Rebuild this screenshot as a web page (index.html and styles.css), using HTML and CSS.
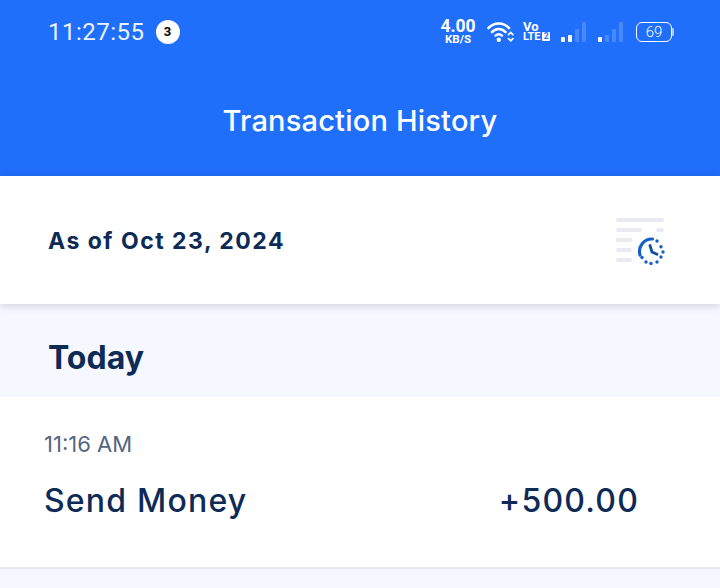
FILE: index.html
```html
<!DOCTYPE html>
<html lang="en">
<head>
<meta charset="utf-8">
<title>Transaction History</title>
<link rel="stylesheet" href="styles.css">
</head>
<body>
<header class="header">
  <div class="status">
    <div class="status-left">
      <span class="clock">11:27:55</span>
      <span class="badge">3</span>
    </div>
    <div class="status-right">
      <div class="speed"><span class="speed-num">4.00</span><span class="speed-unit">KB/S</span></div>
      <svg class="wifi" width="28" height="22" viewBox="0 0 28 22" fill="none" stroke="#fff" stroke-linecap="round">
        <path d="M1.5 7C7.5 1 16 1 22 7" stroke-width="2.6"/>
        <path d="M5 11C9 7 14.5 7 18.5 11" stroke-width="2.6"/>
        <path d="M8.5 14.6C10.5 12.8 13 12.8 15 14.6" stroke-width="2.4"/>
        <circle cx="11.8" cy="18.8" r="2.2" fill="#fff" stroke="none"/>
        <path d="M21.5 13.6l2.2-2.2 2.2 2.2M21.5 17.6l2.2 2.2 2.2-2.2" stroke-width="1.7"/>
      </svg>
      <div class="volte">
        <span class="vo">Vo</span>
        <span class="lte">LTE<span class="sim">2</span></span>
      </div>
      <div class="signal signal-a">
        <i class="bar b1 on"></i><i class="bar b2 on"></i><i class="bar b3"></i><i class="bar b4"></i>
      </div>
      <div class="signal signal-b">
        <i class="bar b1 on"></i><i class="bar b2"></i><i class="bar b3"></i><i class="bar b4"></i>
      </div>
      <div class="battery"><span class="battery-body">69</span><i class="battery-cap"></i></div>
    </div>
  </div>
  <h1 class="title">Transaction History</h1>
</header>
<section class="asof">
  <span class="asof-text">As of Oct 23, 2024</span>
  <svg class="history-icon" width="50" height="50" viewBox="0 0 50 50" fill="none">
    <g fill="#e9ebf1">
      <rect x="0" y="0" width="48" height="4" rx="2"/>
      <rect x="0" y="10" width="26" height="4" rx="2"/>
      <rect x="40" y="10" width="8" height="4" rx="2"/>
      <rect x="0" y="20" width="16" height="4" rx="2"/>
      <rect x="0" y="30" width="16" height="4" rx="2"/>
      <rect x="0" y="40" width="16" height="4" rx="2"/>
    </g>
    <path d="M24 37A12.5 12.5 0 0 1 36.5 21" stroke="#1560c8" stroke-width="3.2" stroke-linecap="round"/>
    <path d="M34 27.5l2 6.5 5 2.2" stroke="#0d4fa8" stroke-width="2.8" stroke-linecap="round" stroke-linejoin="round"/>
    <g fill="#1560c8">
      <circle cx="41" cy="23" r="1.7"/><circle cx="45" cy="28.7" r="1.7"/><circle cx="47" cy="34" r="1.7"/><circle cx="45" cy="39" r="1.7"/><circle cx="41" cy="44" r="1.7"/><circle cx="35" cy="45.5" r="1.7"/><circle cx="30" cy="44" r="1.7"/><circle cx="26" cy="39.5" r="1.7"/>
    </g>
  </svg>
</section>
<section class="group"><h2 class="group-title">Today</h2></section>
<section class="txn">
  <div class="txn-time">11:16 AM</div>
  <div class="txn-row">
    <span class="txn-name">Send Money</span>
    <span class="txn-amount">+500.00</span>
  </div>
</section>
</body>
</html>
```
FILE: styles.css
```css
* { box-sizing: border-box; }
html, body { margin: 0; height: 100%; }
body {
  width: 720px;
  height: 588px;
  overflow: hidden;
  background: #f5f8fe;
  font-family: Inter, Lato, sans-serif;
  color: #0e2a56;
}
.header {
  height: 176px;
  background: #1f6ffb;
  color: #fff;
  display: flex;
  flex-direction: column;
}
.status {
  height: 63px;
  padding: 0 46px 0 48px;
  display: flex;
  justify-content: space-between;
  align-items: center;
}
.status-left { display: flex; align-items: center; gap: 11px; }
.clock { font-family: Roboto, sans-serif; font-size: 24px; letter-spacing: 0.5px; color: #eaf2ff; }
.badge {
  width: 24px; height: 24px; border-radius: 50%;
  background: #fff; color: #000;
  font: 700 13px Roboto, sans-serif;
  display: flex; align-items: center; justify-content: center;
}
.status-right { display: flex; align-items: center; }
.speed { display: flex; flex-direction: column; align-items: center; width: 34px; margin-right: 12px; font-family: Roboto, sans-serif; font-weight: 700; }
.speed-num { font-size: 17.5px; line-height: 15px; }
.speed-unit { font-size: 11.5px; line-height: 11px; }
.wifi { margin-right: 8px; }
.volte { display: flex; flex-direction: column; width: 27px; font-family: Roboto, sans-serif; font-weight: 700; margin-right: 11px; }
.vo { font-size: 13px; line-height: 10px; }
.lte { font-size: 11px; line-height: 10px; letter-spacing: -0.2px; display: flex; align-items: center; gap: 2px; white-space: nowrap; }
.sim { background: #fff; color: #1f6ffb; font-size: 8.5px; padding: 0 1.5px; border-radius: 1px; line-height: 9px; }
.signal { display: flex; align-items: flex-end; gap: 3px; height: 20px; }
.signal-a { margin-right: 12px; }
.signal-b { margin-right: 13px; }
.bar { display: block; width: 4px; background: #4589fc; border-radius: 1px; }
.bar.on { background: #fff; }
.b1 { height: 5px; }
.b2 { height: 7px; }
.b3 { height: 13px; }
.b4 { height: 20px; }
.battery { display: flex; align-items: center; }
.battery-body {
  width: 36px; height: 20px;
  border: 1.5px solid #fff; border-radius: 6px;
  font: 300 15px Roboto, sans-serif;
  display: flex; align-items: center; justify-content: center;
}
.battery-cap { display: block; width: 2px; height: 8px; background: #a9c8fd; border-radius: 0 1px 1px 0; }
.title {
  margin: 0;
  flex: 1;
  padding-top: 1px;
  display: flex; align-items: center; justify-content: center;
  font-size: 29px;
  font-weight: 500;
  letter-spacing: 0.2px;
}
.asof {
  position: relative;
  height: 128px;
  background: #fff;
  padding: 2px 54px 0 48px;
  display: flex;
  align-items: center;
  justify-content: space-between;
  box-shadow: 0 2px 8px rgba(20, 20, 20, 0.16);
}
.asof-text { font-size: 23px; font-weight: 700; letter-spacing: 1.5px; }
.history-icon { margin-top: 3px; }
.group {
  height: 93px;
  padding: 13px 0 0 48px;
  display: flex;
  align-items: center;
}
.group-title { margin: 0; font-size: 32px; font-weight: 700; }
.txn {
  height: 172px;
  background: #fff;
  border-bottom: 2px solid #e6e8ec;
  padding: 32px 81px 0 44px;
}
.txn-time { font-size: 22px; line-height: 30px; color: #54667f; font-weight: 400; }
.txn-row { display: flex; justify-content: space-between; align-items: center; margin-top: 21px; font-size: 32px; line-height: 42px; font-weight: 500; letter-spacing: 1.2px; }
```
